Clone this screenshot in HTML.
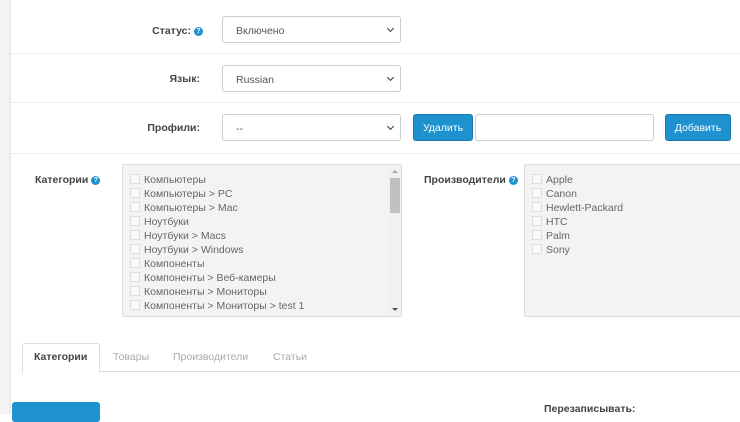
<!DOCTYPE html>
<html><head><meta charset="utf-8"><style>
*{box-sizing:border-box;margin:0;padding:0}
body{width:740px;height:414px;overflow:hidden;background:#fff;font-family:"Liberation Sans","DejaVu Sans",sans-serif;font-size:10.5px;color:#555;position:relative}
.a{position:absolute}
.strip{left:0;top:0;height:414px;background:#f5f5f5;border-right:2px solid #ebebeb;width:11px}
.hr{left:11px;right:0;height:1px;background:#eee}
.lbl{font-weight:bold;color:#444;text-align:right;white-space:nowrap}
.q{display:inline-block;width:9px;height:9px;border-radius:50%;background:#1e91cf;color:#fff;font-size:7px;line-height:9px;text-align:center;vertical-align:1px;margin-left:3px}
.sel{border:1px solid #ccc;border-radius:3px;background:#fff;height:27px;padding-left:13px;line-height:28px;color:#555;width:179px;left:222px}
.sel:after{content:"";position:absolute;right:7px;top:9px;width:4px;height:4px;border-right:1.5px solid #333;border-bottom:1.5px solid #333;transform:rotate(45deg)}
.btn{background:#1e91cf;color:#fff;border-radius:3px;text-align:center;border:1px solid #1978ab}
.box{background:#f3f3f3;border:1px solid #ddd;border-radius:2px}
.it{position:absolute;left:7px;height:14px;line-height:14px;white-space:nowrap;color:#666}
.it i{display:inline-block;width:10px;height:10px;border:1px solid #ddd;background:#fafafa;margin-right:4px;vertical-align:-1px}
.tab{color:#aaa;top:351px}
</style></head><body>
<div class="a strip"></div>
<div class="a hr" style="top:53px"></div>
<div class="a hr" style="top:102px"></div>
<div class="a hr" style="top:153px"></div>

<div class="a lbl" style="left:100px;width:103px;top:25px">Статус:<span class="q">?</span></div>
<div class="a sel" style="top:16px">Включено</div>
<div class="a lbl" style="left:100px;width:100px;top:73px">Язык:</div>
<div class="a sel" style="top:65px">Russian</div>
<div class="a lbl" style="left:100px;width:100px;top:122px">Профили:</div>
<div class="a sel" style="top:114px">--</div>
<div class="a btn" style="left:413px;top:114px;width:60px;height:27px;line-height:26px">Удалить</div>
<div class="a" style="left:475px;top:114px;width:179px;height:27px;border:1px solid #ccc;border-radius:3px"></div>
<div class="a btn" style="left:665px;top:114px;width:66px;height:27px;line-height:26px">Добавить</div>

<div class="a lbl" style="left:35px;top:174px;text-align:left">Категории<span class="q">?</span></div>
<div class="a box" style="left:122px;top:164px;width:280px;height:153px;overflow:hidden">
<div class="it" style="top:8px"><i></i>Компьютеры</div>
<div class="it" style="top:22px"><i></i>Компьютеры &gt; PC</div>
<div class="it" style="top:36px"><i></i>Компьютеры &gt; Mac</div>
<div class="it" style="top:50px"><i></i>Ноутбуки</div>
<div class="it" style="top:64px"><i></i>Ноутбуки &gt; Macs</div>
<div class="it" style="top:78px"><i></i>Ноутбуки &gt; Windows</div>
<div class="it" style="top:92px"><i></i>Компоненты</div>
<div class="it" style="top:106px"><i></i>Компоненты &gt; Веб-камеры</div>
<div class="it" style="top:120px"><i></i>Компоненты &gt; Мониторы</div>
<div class="it" style="top:134px"><i></i>Компоненты &gt; Мониторы &gt; test 1</div>
<div class="a" style="left:265px;top:0;width:14px;height:152px;background:#f1f1f1"></div>
<div class="a" style="left:267px;top:13px;width:10px;height:35px;background:#c1c1c1"></div>
<div class="a" style="left:269px;top:5px;width:0;height:0;border:3px solid transparent;border-bottom-color:#aaa;border-top:0"></div>
<div class="a" style="left:269px;top:143px;width:0;height:0;border:3px solid transparent;border-top-color:#555;border-bottom:0"></div>
</div>

<div class="a lbl" style="left:424px;top:174px;text-align:left">Производители<span class="q">?</span></div>
<div class="a box" style="left:524px;top:164px;width:220px;height:153px">
<div class="it" style="top:8px"><i></i>Apple</div>
<div class="it" style="top:22px"><i></i>Canon</div>
<div class="it" style="top:36px"><i></i>Hewlett-Packard</div>
<div class="it" style="top:50px"><i></i>HTC</div>
<div class="it" style="top:64px"><i></i>Palm</div>
<div class="it" style="top:78px"><i></i>Sony</div>
</div>

<div class="a" style="left:22px;top:371px;right:0;height:1px;background:#ddd"></div>
<div class="a" style="left:22px;top:343px;width:78px;height:30px;background:#fff;border:1px solid #ddd;border-bottom:none;border-radius:3px 3px 0 0"></div>
<div class="a lbl" style="left:34px;top:351px;text-align:left">Категории</div>
<div class="a tab" style="left:113px">Товары</div>
<div class="a tab" style="left:173px">Производители</div>
<div class="a tab" style="left:273px">Статьи</div>

<div class="a" style="left:12px;top:402px;width:88px;height:20px;background:#1e91cf;border-radius:3px"></div>
<div class="a lbl" style="left:544px;top:403px;text-align:left">Перезаписывать:</div>
</body></html>
